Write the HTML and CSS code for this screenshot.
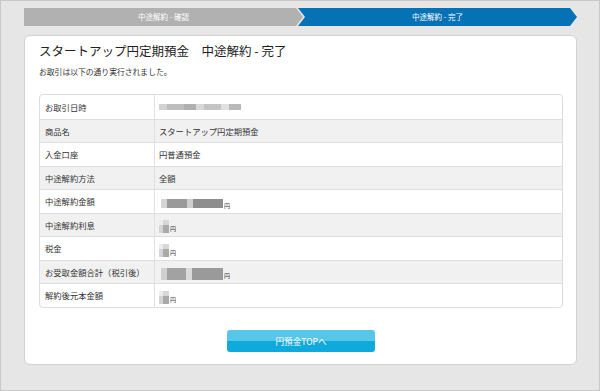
FILE: index.html
```html
<!DOCTYPE html>
<html lang="ja">
<head>
    <meta charset="UTF-8">
    <title>中途解約 - 完了</title>
    <link rel="stylesheet" href="styles.css">
</head>
<body>
<div class="page">
    <!-- 進行ステップ -->
    <ol class="steps">
        <li class="step done">中途解約 - 確認</li>
        <li class="step now">中途解約 - 完了</li>
    </ol>

    <div class="card">
        <h1 class="ttl">スタートアップ円定期預金　中途解約 - 完了</h1>
        <p class="lead">お取引は以下の通り実行されました。</p>

        <div class="detail">
            <div class="row">
                <div class="th">お取引日時</div>
                <div class="td"><span class="mask m-date"></span></div>
            </div>
            <div class="row">
                <div class="th">商品名</div>
                <div class="td">スタートアップ円定期預金</div>
            </div>
            <div class="row">
                <div class="th">入金口座</div>
                <div class="td">円普通預金</div>
            </div>
            <div class="row">
                <div class="th">中途解約方法</div>
                <div class="td">全額</div>
            </div>
            <div class="row">
                <div class="th">中途解約金額</div>
                <div class="td"><span class="mask m-long"></span><span class="yen">円</span></div>
            </div>
            <div class="row">
                <div class="th">中途解約利息</div>
                <div class="td"><span class="mask m-short"></span><span class="yen">円</span></div>
            </div>
            <div class="row">
                <div class="th">税金</div>
                <div class="td"><span class="mask m-short"></span><span class="yen">円</span></div>
            </div>
            <div class="row">
                <div class="th">お受取金額合計（税引後）</div>
                <div class="td"><span class="mask m-long tall"></span><span class="yen">円</span></div>
            </div>
            <div class="row">
                <div class="th">解約後元本金額</div>
                <div class="td"><span class="mask m-short"></span><span class="yen">円</span></div>
            </div>
        </div>

        <div class="btn_area">
            <a class="btn" href="#">円預金TOPへ</a>
        </div>
    </div>
</div>
</body>
</html>
```

FILE: styles.css
```css
/*기본*/
* {margin: 0; padding: 0; box-sizing: border-box;}
body {width: 600px; height: 391px; font-family: "Noto Sans CJK JP", "Liberation Sans", sans-serif; color: #333;}
a {text-decoration: none;}

.page {height: 391px; background-color: #e6e6e6; border: 1px solid #c9c9c9; padding: 7px 22px 0 23px;}

/*스텝*/
.steps {display: flex; list-style: none; height: 18px;}
.step {flex: 1; height: 18px; line-height: 18px; text-align: center; font-size: 7.5px; color: #fff;
    clip-path: polygon(0 0, calc(100% - 7px) 0, 100% 50%, calc(100% - 7px) 100%, 0 100%);}
.step.done {background-color: #b1b1b1;}
.step.now {background-color: #0672b6; margin-left: -5px;
    clip-path: polygon(0 0, calc(100% - 7px) 0, 100% 50%, calc(100% - 7px) 100%, 0 100%, 7px 50%);}

/*카드*/
.card {margin-top: 9px; height: 330px; background-color: #fff; border: 1px solid #d2d2d2; border-radius: 6px; padding: 6px 13px 0 14px;}
.ttl {font-size: 12.5px; font-weight: normal; color: #222; line-height: 18px;}
.lead {font-size: 7.8px; margin-top: 6px; line-height: 12px;}

/*상세 표*/
.detail {margin-top: 16px; border: 1px solid #dcdcdc; border-radius: 4px; overflow: hidden; font-size: 8.3px;}
.row {display: grid; grid-template-columns: 115px 1fr; height: 23.5px; border-top: 1px solid #dedede;}
.row:first-child {border-top: none;}
.row:nth-child(2n) {background-color: #f1f1f1;}
.th {border-right: 1px solid #e0e0e0; padding-left: 5px; display: flex; align-items: center;}
.td {padding-left: 4px; display: flex; align-items: center;}

/*가려진 값*/
.mask {display: inline-block; align-self: flex-end;}
.m-date {width: 82px; height: 6px; align-self: center;
    background: linear-gradient(90deg, #d2d2d2 0 10%, #bdbdbd 10% 30%, #b0b0b0 30% 45%, #d8d8d8 45% 55%, #c4c4c4 55% 75%, #e0e0e0 75% 85%, #b8b8b8 85% 100%);}
.m-long {width: 62px; height: 9px; margin-left: 2px; margin-bottom: 5px;
    background: linear-gradient(90deg, #d5d5d5 0 10%, #9a9a9a 10% 42%, #cfcfcf 42% 52%, #8e8e8e 52% 100%);}
.m-long.tall {height: 12px; margin-bottom: 3px;
    background: linear-gradient(90deg, #d0d0d0 0 10%, #a2a2a2 10% 40%, #dadada 40% 50%, #9a9a9a 50% 100%);}
.m-short {width: 10px; height: 13px; margin-bottom: 3px;
    background: linear-gradient(180deg, rgba(255,255,255,0.55) 0 40%, transparent 40% 100%),
        linear-gradient(90deg, #d4d4d4 0 40%, #a9a9a9 40% 100%);}
.yen {font-size: 6px; align-self: flex-end; margin-bottom: 3px; margin-left: 1px; line-height: 8px;}

/*버튼*/
.btn_area {text-align: center; margin-top: 18px;}
.btn {display: inline-block; width: 148px; height: 22px; line-height: 22px; font-size: 8.6px; color: #fff; border-radius: 3px;
    background: linear-gradient(180deg, #58c6e9 0 50%, #10a9dc 50% 100%);}
```
